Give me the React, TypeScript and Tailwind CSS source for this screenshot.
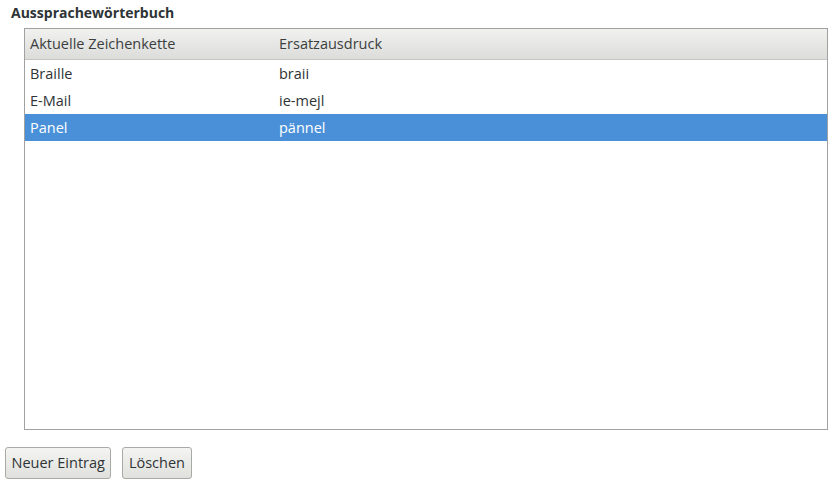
import React from 'react'

const rows = [
  { from: 'Braille', to: 'braii' },
  { from: 'E-Mail', to: 'ie-mejl' },
  { from: 'Panel', to: 'pännel', selected: true },
]

export default function App() {
  return (
    <div className="w-[836px] h-[483px] bg-white text-[#2e3436] font-['Open_Sans',sans-serif] text-[14.5px] flex flex-col">
      <div className="pl-[11px] pt-[2px] h-[28px] font-bold text-[14px]">Aussprachewörterbuch</div>

      <div className="ml-[24px] mr-[8px] h-[402px] border border-[#a1a1a1] flex flex-col">
        <div className="h-[31px] flex items-center border-b border-[#c4c6c2] bg-gradient-to-b from-[#f1f2f0] to-[#dcdcda] text-[#3b3e3e]">
          <div className="w-[254px] pl-[5px]">Aktuelle Zeichenkette</div>
          <div className="flex-1">Ersatzausdruck</div>
        </div>
        {rows.map((r) => (
          <div
            key={r.from}
            className={`h-[27px] flex items-center ${r.selected ? 'bg-[#4a90d9] text-white' : 'text-[#2e3436]'}`}
          >
            <div className="w-[254px] pl-[5px]">{r.from}</div>
            <div className="flex-1">{r.to}</div>
          </div>
        ))}
      </div>

      <div className="flex gap-[11px] pl-[5px] pt-[17px]">
        <button
          type="button"
          className="h-[32px] px-[5.5px] rounded-[3px] border border-[#a8aaa5] bg-gradient-to-b from-[#f4f4f2] to-[#e0e0dd] text-[#2e3436]"
        >
          Neuer Eintrag
        </button>
        <button
          type="button"
          className="h-[32px] px-[5.5px] rounded-[3px] border border-[#a8aaa5] bg-gradient-to-b from-[#f4f4f2] to-[#e0e0dd] text-[#2e3436]"
        >
          Löschen
        </button>
      </div>
    </div>
  )
}
